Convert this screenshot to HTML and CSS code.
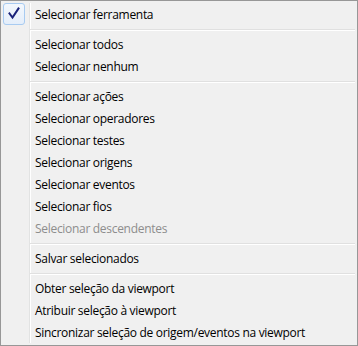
FILE: index.html
```html
<!DOCTYPE html>
<html lang="pt">
<head>
    <meta charset="UTF-8">
    <meta name="viewport" content="width=device-width, initial-scale=1.0">
    <title>Menu de seleção</title>
    <link rel="stylesheet" href="styles.css">
</head>
<body>
    <div class="menu">
        <div class="item checked">
            <span class="icon">
                <svg class="check" width="20" height="20" viewBox="0 0 20 20">
                    <path d="M5.5 9.5 L8.5 13.5 L14.5 4.5" fill="none" stroke="#1a237a" stroke-width="2" stroke-linejoin="miter" stroke-linecap="square"/>
                </svg>
            </span>
            <span class="label">Selecionar ferramenta</span>
        </div>
        <div class="sep"></div>
        <div class="item"><span class="icon"></span><span class="label">Selecionar todos</span></div>
        <div class="item"><span class="icon"></span><span class="label">Selecionar nenhum</span></div>
        <div class="sep"></div>
        <div class="item"><span class="icon"></span><span class="label">Selecionar ações</span></div>
        <div class="item"><span class="icon"></span><span class="label">Selecionar operadores</span></div>
        <div class="item"><span class="icon"></span><span class="label">Selecionar testes</span></div>
        <div class="item"><span class="icon"></span><span class="label">Selecionar origens</span></div>
        <div class="item"><span class="icon"></span><span class="label">Selecionar eventos</span></div>
        <div class="item"><span class="icon"></span><span class="label">Selecionar fios</span></div>
        <div class="item disabled"><span class="icon"></span><span class="label">Selecionar descendentes</span></div>
        <div class="sep"></div>
        <div class="item"><span class="icon"></span><span class="label">Salvar selecionados</span></div>
        <div class="sep"></div>
        <div class="item"><span class="icon"></span><span class="label">Obter seleção da viewport</span></div>
        <div class="item"><span class="icon"></span><span class="label">Atribuir seleção à viewport</span></div>
        <div class="item"><span class="icon"></span><span class="label">Sincronizar seleção de origem/eventos na viewport</span></div>
    </div>
</body>
</html>
```

FILE: styles.css
```css
body {
    margin: 0;
    font-family: 'Open Sans', 'Liberation Sans', sans-serif;
    font-size: 12px;
    letter-spacing: -0.3px;
    color: #000;
}
.menu {
    width: 358px;
    height: 346px;
    box-sizing: border-box;
    border: 1px solid #979797;
    padding: 2px;
    background:
        linear-gradient(to right, transparent 26px, #e2e3e3 26px, #e2e3e3 27px, #fff 27px, #fff 28px, transparent 28px),
        #f0f0f0;
    background-origin: content-box;
    background-repeat: no-repeat;
}
.item {
    display: flex;
    align-items: center;
    height: 22px;
}
.icon {
    width: 22px;
    height: 22px;
    margin-right: 10px;
    flex: none;
    box-sizing: border-box;
    display: flex;
    align-items: center;
    justify-content: center;
}
.checked .icon {
    border: 1px solid #a8cbf1;
    border-radius: 3px;
    background: linear-gradient(#f3f8fd, #e4eefa);
}
.check {
    display: block;
}
.label {
    white-space: nowrap;
}
.disabled {
    color: #8d8d8d;
}
.sep {
    height: 8px;
    margin-left: 27px;
    box-sizing: border-box;
    padding-top: 4px;
}
.sep::before {
    content: "";
    display: block;
    height: 1px;
    background: #e0e0e0;
    border-bottom: 1px solid #fff;
}
```
